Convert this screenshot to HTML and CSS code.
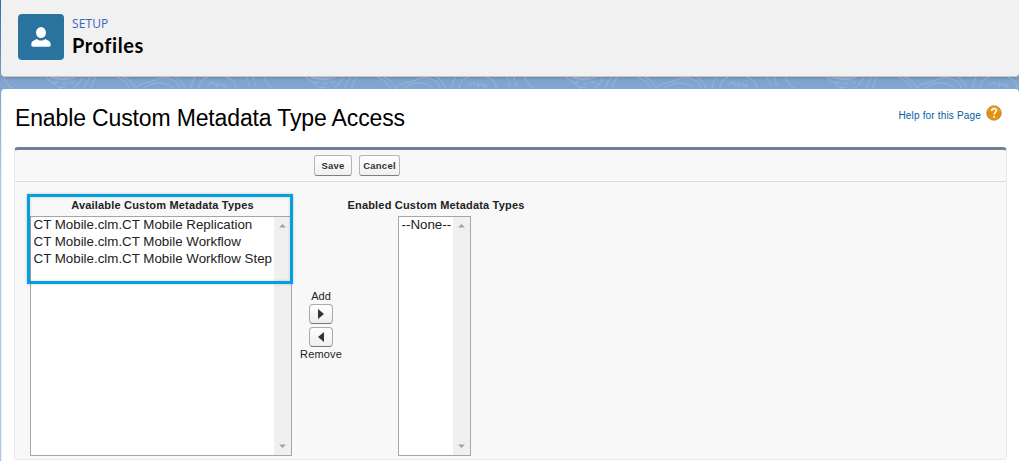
FILE: index.html
```html
<!DOCTYPE html>
<html lang="en">
<head>
<meta charset="utf-8">
<title>Profiles</title>
<link rel="stylesheet" href="styles.css">
</head>
<body>
<header class="page-header">
  <span class="header-icon">
    <svg width="20" height="20" viewBox="0 0 20 20" fill="#fff"><ellipse cx="10" cy="5.6" rx="5" ry="5.5"/><path d="M.3 17.200c0-2.800 2.800-4.100 5.600-5.200 1.200 1 2.600 1.500 4.100 1.500s2.900-.5 4.100-1.500c2.800 1.100 5.600 2.400 5.600 5.200v.8c0 1-.7 1.700-1.700 1.700H2c-1 0-1.700-.7-1.700-1.700z"/></svg>
  </span>
  <div class="header-text">
    <span class="eyebrow">SETUP</span>
    <h1 class="header-title">Profiles</h1>
  </div>
</header>
<svg class="contours" width="1019" height="12" viewBox="0 0 1019 12">
  <defs>
    <pattern id="contour" width="260.5" height="12" patternUnits="userSpaceOnUse">
      <g fill="none" stroke="#a6c2df" stroke-width=".8" opacity=".75">
        <path d="M4 0Q5 7 14 12M45 0L61 12M50 1H69M52 6l6-1M62 7l5-1M70 6l4-1M58 11l7-1M74 11l4-5M78 8l4-7"/>
        <path d="M52 0Q62 5 75 0M84 12Q86 5 90 0M91 12Q92 5 96 0"/>
        <path d="M117 0Q128 5 130 12M123 0Q133 3 135 12M136 12C137 5 149 7 155 3S178 0 180 12M143 12C151 5 164 3 174 12"/>
        <path d="M176 0Q184 5 185 12M191 12Q191 6 195 0M199 12Q198 3 208 0M226 0Q236 3 236 12"/>
        <path d="M207 8l6-3 1 3 4-2-1 4 5-4 1 4 3-3-1 5"/>
        <path d="M246 0Q249 5 250 12M253 0L257 12" stroke-dasharray="4 2"/>
      </g>
    </pattern>
  </defs>
  <rect width="1019" height="12" fill="url(#contour)"/>
</svg>
<main class="content">
  <div class="title-row">
    <h2 class="page-title">Enable Custom Metadata Type Access</h2>
    <a class="help"><span class="help-text">Help for this Page</span>
      <svg class="help-icon" width="16" height="16" viewBox="0 0 16 16"><defs><linearGradient id="amber" x2="0" y2="1"><stop stop-color="#efad37"/><stop offset=".5" stop-color="#e78d09"/><stop offset="1" stop-color="#e99916"/></linearGradient></defs><circle cx="8" cy="8" r="7.200" fill="url(#amber)" stroke="#a9752a" stroke-width=".8"/><path d="M5.700 6Q5.800 3.800 8 3.800T10.300 6C10.300 7.500 8.200 7.500 8.200 9.500" fill="none" stroke="#fff" stroke-width="1.600"/><circle cx="8.200" cy="11.700" r="1" fill="#fff"/></svg>
    </a>
  </div>
  <section class="panel">
    <div class="toolbar"><button class="btn save">Save</button><button class="btn cancel">Cancel</button></div>
    <div class="duel">
      <div class="column available">
        <h3 class="list-label">Available Custom Metadata Types</h3>
        <div class="listbox">
          <ul class="options"><li>CT Mobile.clm.CT Mobile Replication</li><li>CT Mobile.clm.CT Mobile Workflow</li><li>CT Mobile.clm.CT Mobile Workflow Step</li></ul>
          <div class="track"><svg width="9" height="5"><path d="M1 4.500L4.500 1 8 4.500z" fill="#a3a3a3"/></svg><svg width="9" height="5"><path d="M1 .5H8L4.500 4z" fill="#a3a3a3"/></svg></div>
        </div>
        <div class="highlight"></div>
      </div>
      <div class="transfer">
        <span class="add">Add</span>
        <button class="arrow"><svg width="8" height="12"><path d="M1 1V11L7 6z" fill="#333"/></svg></button>
        <button class="arrow"><svg width="8" height="12"><path d="M7 1V11L1 6z" fill="#333"/></svg></button>
        <span class="remove">Remove</span>
      </div>
      <div class="column enabled">
        <h3 class="list-label">Enabled Custom Metadata Types</h3>
        <div class="listbox narrow">
          <ul class="options"><li>--None--</li></ul>
          <div class="track"><svg width="9" height="5"><path d="M1 4.500L4.500 1 8 4.500z" fill="#a3a3a3"/></svg><svg width="9" height="5"><path d="M1 .5H8L4.500 4z" fill="#a3a3a3"/></svg></div>
        </div>
      </div>
    </div>
  </section>
</main>
</body>
</html>
```

FILE: styles.css
```css
* { box-sizing: border-box; }
body { margin: 0; height: 461px; overflow: hidden; display: flex; flex-direction: column; background: linear-gradient(#2870b2 0, #7fa3ce 77px, #82a6d0 89px, #afc4e8 180px); font-family: "Liberation Sans", Arial, sans-serif; color: #000; }
h1, h2, h3, ul { margin: 0; padding: 0; font-weight: normal; list-style: none; }
svg { display: block; flex: none; }
.page-header { height: 77px; flex: none; margin-left: 1px; padding: 14px 17px; display: flex; gap: 8px; background: #f1f1f1; border-bottom: 1px solid #c9c7c5; border-radius: 0 0 4px 4px; box-shadow: 0 2px 2px rgba(0,0,0,.12); }
.header-icon { width: 46px; height: 46px; border-radius: 4px; background: #2a739e; display: flex; align-items: center; justify-content: center; }
.header-text { display: flex; flex-direction: column; }
.eyebrow { font: 12px/19px "Open Sans", sans-serif; letter-spacing: .1px; color: #3568bd; }
.header-title { font: bold 20px/24px Lato, sans-serif; letter-spacing: .55px; font-variant-ligatures: common-ligatures; }
.contours { flex: none; }
.content { flex: 1; margin-left: 1px; padding: 0 12px 0 13px; background: #fff; border-left: 1px solid #edf0f6; border-radius: 4px 4px 0 0; }
.title-row { height: 58px; display: flex; justify-content: space-between; padding: 15px 5px 0 0; }
.page-title { font-size: 23px; line-height: 28px; letter-spacing: -.14px; white-space: nowrap; }
.help { display: flex; gap: 5px; color: #015ba7; font-size: 10px; line-height: 24px; }
.help-text { letter-spacing: .17px; }
.help-icon { margin-top: 1px; }
.panel { margin-left: -1px; height: 313px; background: #f8f8f8; border: 1px solid #eaeaea; border-top: 3px solid #747e96; border-radius: 4px; }
.toolbar { height: 32px; border-bottom: 1px solid #dbdbdb; display: flex; gap: 7px; padding: 5px 0 0 299px; }
.btn { height: 21px; border: 1px solid #b5b5b5; border-bottom-color: #7f7f7f; border-radius: 3px; background: linear-gradient(#fff, #f0f0f0); padding: 0; font: bold 9.500px "Liberation Sans", Arial, sans-serif; letter-spacing: .25px; color: #333; }
.save { width: 38px; }
.cancel { width: 41px; }
.duel { display: flex; padding: 15px 0 0 15px; }
.column { position: relative; }
.available { width: 262px; }
.list-label { height: 19px; padding-top: 1px; font-size: 11px; line-height: 14px; font-weight: bold; letter-spacing: .19px; color: #222; white-space: nowrap; text-align: center; padding-left: 3px; }
.listbox { width: 262px; height: 240px; display: flex; justify-content: space-between; border: 1px solid #a6a6a6; background: #fff; }
.options { margin-top: -1px; padding-left: 2.500px; font-size: 13.333px; line-height: 17px; white-space: nowrap; color: #222; }
.track { width: 17px; background: #f0f0f0; display: flex; flex-direction: column; align-items: center; justify-content: space-between; padding: 6px 0; }
.highlight { position: absolute; left: -3px; top: -3px; width: 266px; height: 90px; border: 3px solid #00a1e0; box-shadow: 0 0 3px rgba(0,0,0,.2), inset 0 0 3px rgba(0,0,0,.18); }
.transfer { width: 58px; display: flex; flex-direction: column; align-items: center; padding-top: 91px; font-size: 11px; line-height: 16px; color: #222; }
.arrow { width: 24px; height: 20px; margin-bottom: 3px; padding: 0; display: flex; align-items: center; justify-content: center; border: 1px solid #aaa; border-bottom-color: #777; border-radius: 4px; background: linear-gradient(#fff, #eee); }
.remove { margin-top: -4px; letter-spacing: .15px; }
.enabled { width: 177px; display: flex; flex-direction: column; align-items: center; margin-left: -4px; }
.narrow { width: 73px; }
```
